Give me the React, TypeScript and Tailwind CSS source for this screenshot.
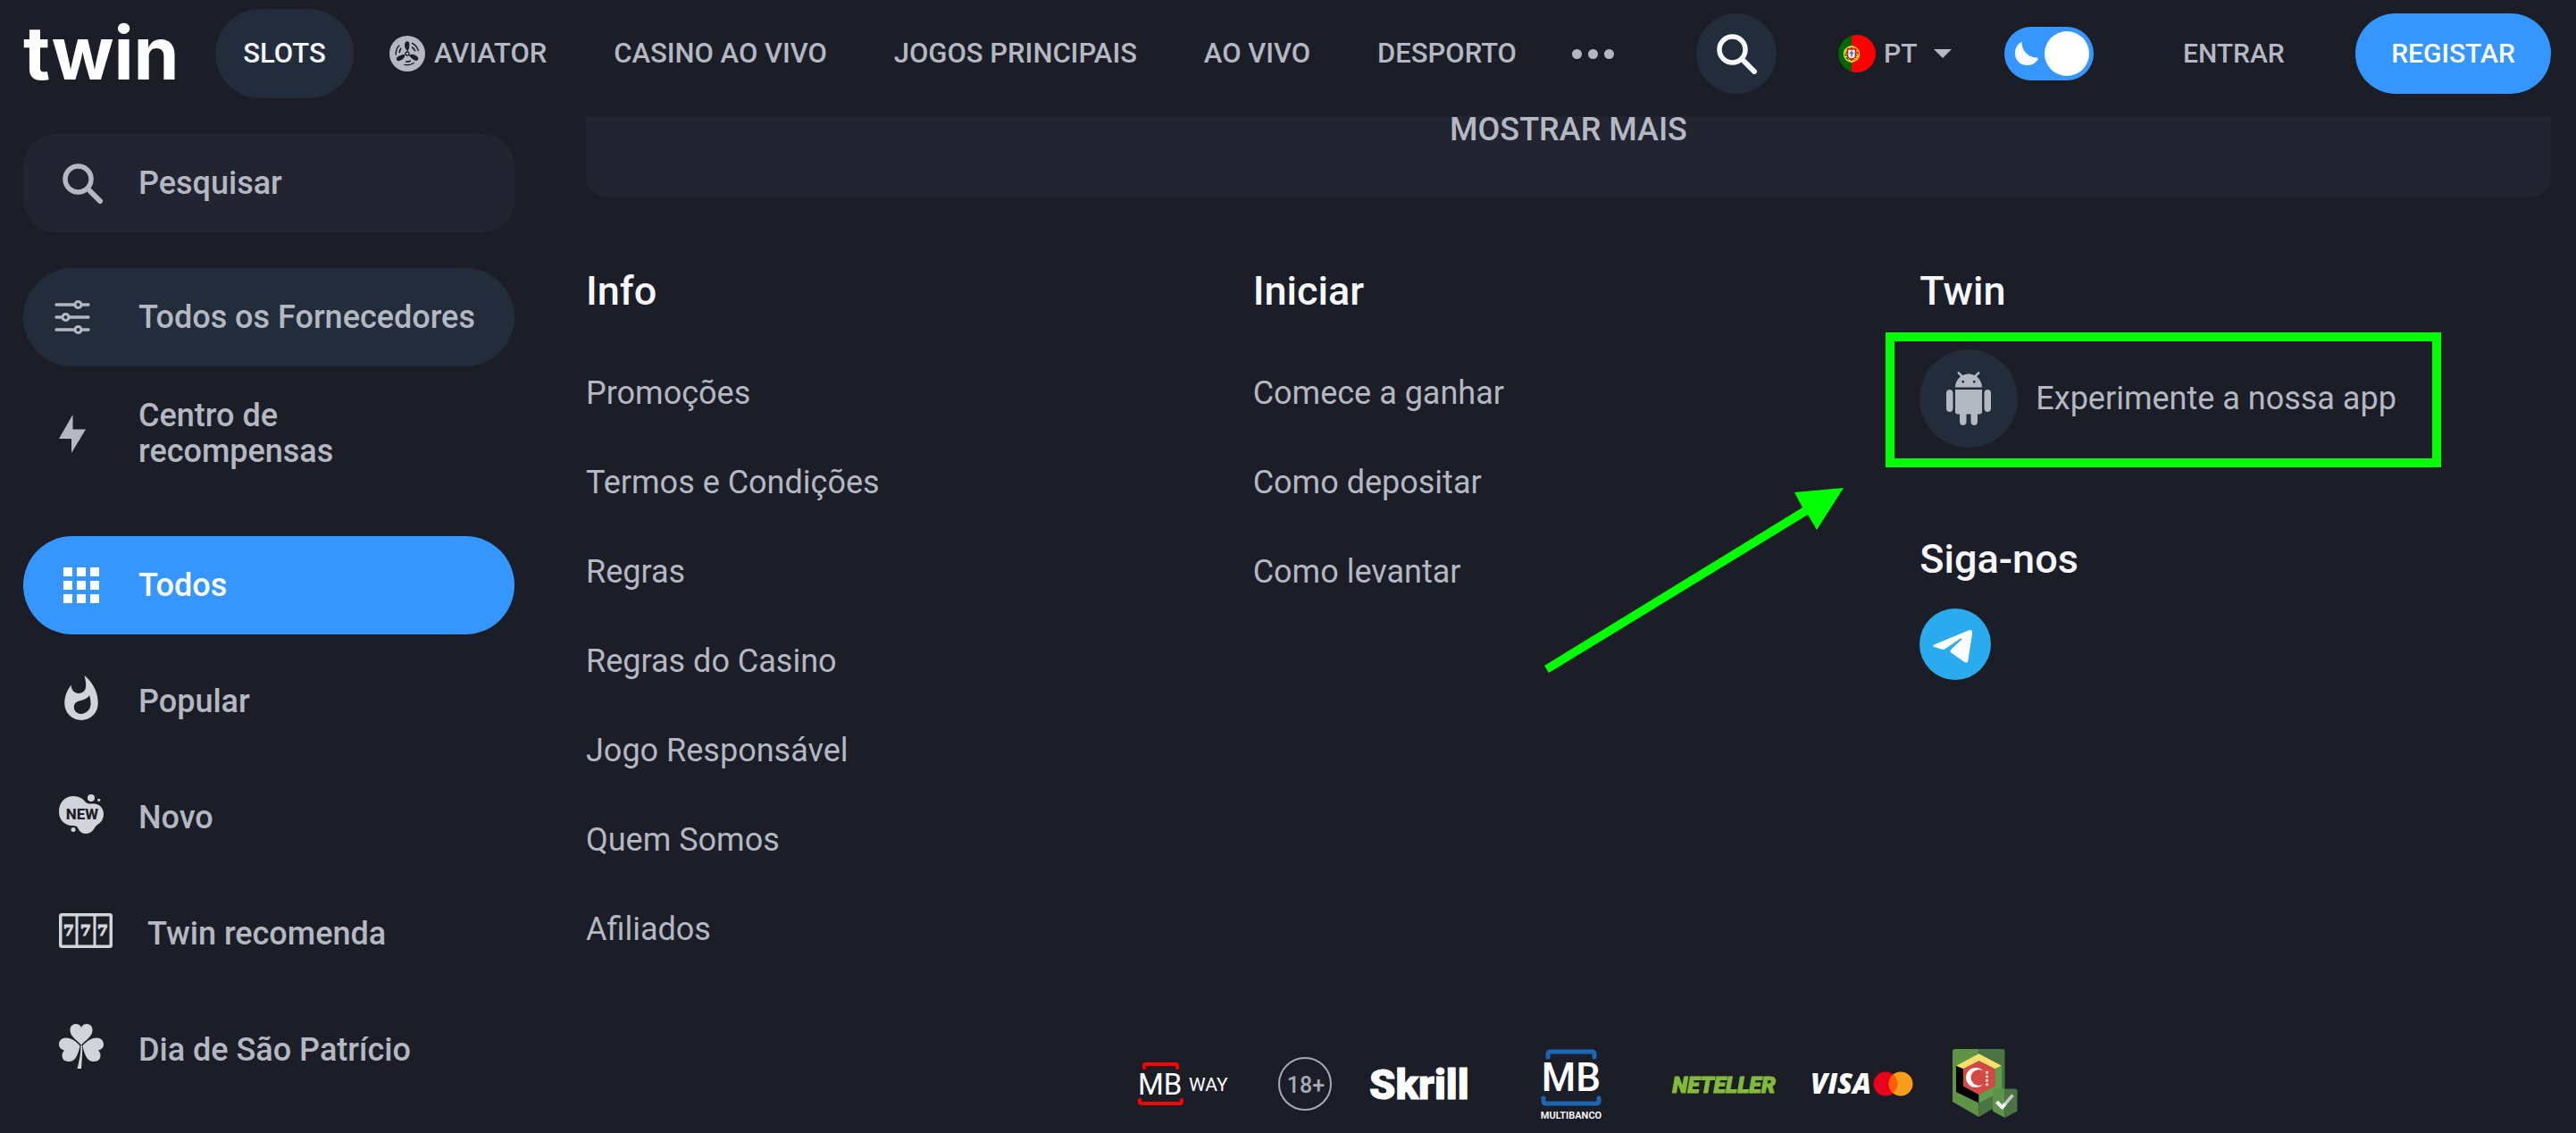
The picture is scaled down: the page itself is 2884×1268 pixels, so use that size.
import React from "react";

const SearchIcon = () => (
  <svg viewBox="-1 -1 46 46" className="size-[46px] shrink-0" fill="none" stroke="currentColor" aria-hidden="true">
    <circle cx="17.5" cy="17.5" r="14.5" strokeWidth="5.5" />
    <path d="M31 31L42 42" strokeWidth="6" strokeLinecap="round" />
    <path d="M28 28l4 4" strokeWidth="5" />
  </svg>
);

const AviatorIcon = () => (
  <svg viewBox="0 0 40 40" className="size-10 shrink-0" aria-hidden="true">
    <circle cx="20" cy="20" r="20" fill="#b3b8c2" />
    <g fill="none" stroke="#1c1e27" strokeLinecap="round">
      {[0, 120, 240].map((angle) => (
        <g key={angle} transform={`rotate(${angle} 20 20)`}>
          <path d="M18 8.5c.8-2.600 3.600-2.200 3.800.5.2 3-.6 5.500-1.300 7.600-2.200-1.600-3.300-5-2.500-8.100z" fill="#1c1e27" strokeWidth="1.200" />
          <path d="M25.500 8.500a12.800 12.800 0 0 1 6.800 8" strokeWidth="1.400" />
          <path d="M25.500 13a8.500 8.500 0 0 1 3 3.600" strokeWidth="1.600" />
        </g>
      ))}
      <circle cx="20" cy="20" r="2" fill="#b3b8c2" strokeWidth="1.300" />
    </g>
  </svg>
);

const FlagIcon = () => (
  <svg viewBox="0 0 42 42" className="size-[42px] shrink-0" aria-hidden="true">
    <clipPath id="flag-round">
      <circle cx="21" cy="21" r="21" />
    </clipPath>
    <g clipPath="url(#flag-round)">
      <path fill="#006600" d="M0 0h15v42H0z" />
      <path fill="#ff0000" d="M15 0h27v42H15z" />
    </g>
    <g fill="none" stroke="#f5e51b" strokeWidth="1.300">
      <circle cx="15" cy="21.500" r="8.500" />
      <ellipse cx="15" cy="21.500" rx="8.500" ry="3.500" transform="rotate(28 15 21.500)" />
      <ellipse cx="15" cy="21.500" rx="4" ry="8.500" />
      <path d="M7 24.500h16M8 18h14" />
    </g>
    <path d="M10.500 16h9v6.500a4.500 4.500 0 0 1-9 0z" fill="#fff" stroke="#e01010" strokeWidth="1.500" />
    <path d="M15 17.500v7M12.500 20.500h5" stroke="#3a5fc0" strokeWidth="1.400" />
  </svg>
);

const SlidersIcon = () => (
  <svg viewBox="0 0 40 40" className="size-10" fill="none" stroke="currentColor" strokeWidth="3.500" strokeLinecap="round" aria-hidden="true">
    <path d="M2 6h20M31 6h7M2 20h6M17 20h21M2 34h20M31 34h7" />
    <g strokeWidth="3">
      <circle cx="26.500" cy="6" r="3.500" />
      <circle cx="12.500" cy="20" r="3.500" />
      <circle cx="26.500" cy="34" r="3.500" />
    </g>
  </svg>
);

const BoltIcon = () => (
  <svg viewBox="0 0 30 43" className="h-[43px] w-[30px]" fill="currentColor" aria-hidden="true">
    <path d="M15.500 0v16.500H30L14 43V27H0z" />
  </svg>
);

const GridIcon = () => (
  <svg viewBox="0 0 40 40" className="size-10" fill="currentColor" aria-hidden="true">
    {[0, 15, 30].map((y) => [0, 15, 30].map((x) => <rect key={`${x}-${y}`} x={x} y={y} width="10" height="10" />))}
  </svg>
);

const FlameIcon = () => (
  <svg viewBox="4 0.67 16 21.330" className="h-[50px] w-[38px]" fill="#d1d5da" aria-hidden="true">
    <path d="M13.5.67s.74 2.65.74 4.8c0 2.06-1.35 3.73-3.41 3.73-2.07 0-3.63-1.67-3.63-3.73l.03-.36C5.21 7.51 4 10.62 4 14c0 4.42 3.58 8 8 8s8-3.58 8-8C20 8.61 17.41 3.8 13.5.67zM11.71 19c-1.78 0-3.22-1.4-3.22-3.14 0-1.62 1.05-2.76 2.81-3.12 1.77-.36 3.6-1.21 4.62-2.58.39 1.29.59 2.65.59 4.04 0 2.65-2.15 4.8-4.8 4.8z" />
  </svg>
);

const NewIcon = () => (
  <svg viewBox="0 0 50 44" className="h-11 w-[50px]" fill="#d1d5da" aria-hidden="true">
    <path d="M16 2C23 2 27 5 30 9C32 11 36 10.500 40 10.500C46 11 50 16 50 22C50 29 46 32 43 34C39 37 38 44 30 44C23 44 22 38 20 36C18 35 16 35 14 35C5 34 0 28 0 19C0 9 7 2 16 2Z" />
    <circle cx="36" cy="4" r="4" />
    <circle cx="44.700" cy="6.300" r="1.600" />
    <circle cx="16" cy="39.500" r="2.500" />
    <text x="26" y="28" textAnchor="middle" fill="#1c1e27" fontSize="17" fontWeight="800" fontFamily="Roboto, sans-serif">NEW</text>
  </svg>
);

const SlotsIcon = () => (
  <svg viewBox="0 0 60 39" className="h-[39px] w-[60px]" aria-hidden="true">
    <rect x="1.750" y="1.750" width="56.500" height="35.500" rx="1.500" fill="none" stroke="#d1d5da" strokeWidth="3.500" />
    <path d="M20 2v35M40 2v35" stroke="#d1d5da" strokeWidth="3" />
    <g fill="#d1d5da" stroke="#d1d5da" strokeWidth="1.200" fontSize="17" fontWeight="700" fontFamily="DejaVu Serif, serif" textAnchor="middle">
      <text x="11" y="25">7</text>
      <text x="30" y="25">7</text>
      <text x="49" y="25">7</text>
    </g>
  </svg>
);

const CloverIcon = () => (
  <svg viewBox="0 0 50 50" className="size-[50px]" fill="#d1d5da" aria-hidden="true">
    <path d="M25 23.500C20 18 12.500 14 12.500 7C12.500 2 15.500 0 19 0C22 0 24 1.500 25 4C26 1.500 28 0 31 0C34.500 0 37.500 2 37.500 7C37.500 14 30 18 25 23.500Z" />
    <path d="M23.500 24.500C20 20 14 15.500 8 15.500C3 15.500 0 18.500 0 23C0 26 2 28.500 6 29.500C3.500 32 3 35 4 38C5 41 8 42 12 42C19 42 22 32 23.500 24.500Z" />
    <path d="M26.500 24.500C30 20 36 15.500 42 15.500C47 15.500 50 18.500 50 23C50 26 48 28.500 44 29.500C46.500 32 47 35 46 38C45 41 42 42 38 42C31 42 28 32 26.500 24.500Z" />
    <path d="M24.500 24h1.500C26.500 32 25.500 42 25 50H20.500C22.500 42 24.500 33 24.500 24z" />
  </svg>
);

const AndroidIcon = () => (
  <svg viewBox="0 0 24 24" className="size-[60px]" fill="currentColor" aria-hidden="true">
    <path d="M6 18c0 .55.45 1 1 1h1v3.5c0 .83.67 1.5 1.5 1.5s1.5-.67 1.5-1.5V19h2v3.5c0 .83.67 1.5 1.5 1.5s1.5-.67 1.5-1.5V19h1c.55 0 1-.45 1-1V8H6v10zM3.5 8C2.67 8 2 8.67 2 9.5v7c0 .83.67 1.5 1.5 1.5S5 17.33 5 16.5v-7C5 8.67 4.33 8 3.5 8zm17 0c-.83 0-1.5.67-1.5 1.5v7c0 .83.67 1.5 1.5 1.5s1.5-.67 1.5-1.5v-7c0-.83-.67-1.5-1.5-1.5zm-4.97-5.84l1.3-1.3c.2-.2.2-.51 0-.71-.2-.2-.51-.2-.71 0l-1.48 1.48C13.85 1.23 12.95 1 12 1c-.96 0-1.86.23-2.66.63L7.85.15c-.2-.2-.51-.2-.71 0-.2.2-.2.51 0 .71l1.31 1.31C6.97 3.26 6 5.01 6 7h12c0-1.99-.97-3.75-2.47-4.84zM10 5H9V4h1v1zm5 0h-1V4h1v1z" />
  </svg>
);

const TelegramIcon = () => (
  <svg viewBox="0 0 80 80" className="size-20" aria-hidden="true">
    <circle cx="40" cy="40" r="40" fill="#2aabee" />
    <path fill="#fff" d="M16.500 40.500L55.500 24.300Q59.500 23 59 28L54.500 57.500Q54 62 50.500 60L36 50Q33.500 48 35.500 45.500L47.500 34.500Q48 33 46 33.500L29 45Q27 46.300 24.500 45.600L16.500 43Q14 42 16.500 40.500Z" />
  </svg>
);

const MbWayLogo = () => (
  <svg viewBox="0 0 100 48" className="h-12 w-[100px] overflow-visible" role="img" aria-label="MB Way">
    <g fill="none" stroke="#ff0000" strokeWidth="4" strokeLinecap="round" strokeLinejoin="round">
      <path d="M7 6V4q0-2 2-2H42q2 0 2 2v2" />
      <path d="M2 42v2q0 2 2 2H47q2 0 2-2v-2" />
    </g>
    <g fill="#fff" fontFamily="Roboto, sans-serif">
      <text x="0" y="36" fontSize="33" fontWeight="400">MB</text>
      <text x="57" y="32" fontSize="21" fontWeight="400">WAY</text>
    </g>
  </svg>
);

const AgeLogo = () => (
  <svg viewBox="0 0 60 60" className="size-[60px]" role="img" aria-label="18+">
    <circle cx="30" cy="30" r="29" fill="none" stroke="#a3abb5" strokeWidth="2" />
    <text x="31" y="40" textAnchor="middle" fill="#a3abb5" fontSize="25" fontWeight="500" fontFamily="Roboto, sans-serif">18+</text>
  </svg>
);

const SkrillLogo = () => (
  <svg viewBox="0 0 112 40" className="h-10 w-28 overflow-visible" role="img" aria-label="Skrill">
    <text x="0" y="37" fill="#fff" stroke="#fff" strokeWidth="1" fontSize="47" fontWeight="900" fontFamily="Roboto, sans-serif">Skrill</text>
  </svg>
);

const MultibancoLogo = () => (
  <svg viewBox="0 0 68 80" className="h-20 w-[68px] overflow-visible" role="img" aria-label="Multibanco">
    <g fill="none" stroke="#1a68b3" strokeWidth="5" strokeLinecap="round" strokeLinejoin="round">
      <path d="M8 10V7q0-3 3-3H57q3 0 3 3v3" />
      <path d="M3 56v3q0 3 3 3H62q3 0 3-3v-3" />
    </g>
    <g fill="#fff" textAnchor="middle" fontFamily="Roboto, sans-serif">
      <text x="34" y="48" fontSize="44" fontWeight="500">MB</text>
      <text x="34" y="79" fontSize="11" fontWeight="600">MULTIBANCO</text>
    </g>
  </svg>
);

const NetellerLogo = () => (
  <svg viewBox="0 0 114 24" className="h-6 w-[114px] overflow-visible" role="img" aria-label="Neteller">
    <text x="57" y="22" textAnchor="middle" fill="#84ba3b" stroke="#84ba3b" strokeWidth="1" fontSize="25" fontWeight="900" fontStyle="italic" fontFamily="Roboto, sans-serif">NETELLER</text>
  </svg>
);

const CardsLogo = () => (
  <svg viewBox="0 0 116 30" className="h-[30px] w-[116px] overflow-visible" role="img" aria-label="Visa e Mastercard">
    <text x="0" y="26" fill="#fff" fontSize="31" fontWeight="800" fontStyle="italic" fontFamily="Open Sans, sans-serif">VISA</text>
    <circle cx="84" cy="15" r="13.500" fill="#eb001b" />
    <circle cx="101" cy="15" r="13.500" fill="#f79e1b" />
    <path d="M92.500 4.500a13.500 13.500 0 0 1 0 21a13.500 13.500 0 0 1 0-21z" fill="#ff5f00" />
  </svg>
);

const LicenceLogo = () => (
  <svg viewBox="0 0 73 78" className="h-[78px] w-[73px]" role="img" aria-label="Licença verificada">
    <path fill="#5f9448" d="M29.500 0H3Q0 0 0 3V59L29.500 76z" />
    <path fill="#4a7443" d="M29.500 0H56Q58.500 0 58.500 3V59L29.500 76z" />
    <path fill="#f9e06c" d="M29.500 5.300L55 18.700l-7.500 3.600-18-9-17.500 9-8-3.600z" />
    <path fill="#000" d="M4 18.700l8 3.600v19.200L29.500 51v9.500L4 48z" />
    <path fill="#5f9f4b" d="M55 18.700V47L29.500 60.500V51l18-9.500V22.300z" />
    <path fill="#d34a45" d="M12 22.300l17.500-9 18 9v19.200l-18 9.500L12 41.500z" />
    <circle cx="26" cy="32" r="11" fill="#fff" />
    <circle cx="29.500" cy="32" r="9" fill="#d34a45" />
    <g fill="#fff">
      {[26, 30.5, 35, 39.5].map((y) => (
        <path key={y} d={`M38.500 ${y - 2}l.6 1.400 1.500.1-1.200 1 .4 1.500-1.300-.8-1.300.8.4-1.500-1.200-1 1.500-.1z`} />
      ))}
    </g>
    <path fill="#5f9448" d="M45 47q0-2.500 2.500-2.500H58.500V77L45 69.500z" />
    <path fill="#4a7443" d="M58.500 44.500H70q2.500 0 2.500 2.500V69.500L58.500 77z" />
    <path d="M49.500 59l6 6.500" stroke="#fff" strokeWidth="4" />
    <path d="M54.500 66.500L67.500 51.500" stroke="#c4c7cb" strokeWidth="3.500" />
    <path d="M54.500 66.500L59 61.500" stroke="#fff" strokeWidth="3.500" />
  </svg>
);

const Arrow = () => (
  <svg
    viewBox="0 0 335 208"
    className="pointer-events-none absolute top-[245px] right-full mr-[85px] h-[208px] w-[335px]"
    fill="#00ff00"
    aria-hidden="true"
  >
    <path d="M0 200L289 23L280 6L335 1L305 48L295 31L5 208z" />
  </svg>
);

const sideItems = [
  { label: "Todos", icon: <GridIcon />, className: "bg-[#3596ff] text-white", slot: "w-[50px]" },
  { label: "Popular", icon: <FlameIcon />, className: "", slot: "w-[50px] pb-2" },
  { label: "Novo", icon: <NewIcon />, className: "", slot: "w-[50px] pb-2" },
  { label: "Twin recomenda", icon: <SlotsIcon />, className: "", slot: "w-[60px] pb-2" },
  { label: "Dia de São Patrício", icon: <CloverIcon />, className: "", slot: "w-[50px] pb-2" },
];

const infoLinks = [
  "Promoções",
  "Termos e Condições",
  "Regras",
  "Regras do Casino",
  "Jogo Responsável",
  "Quem Somos",
  "Afiliados",
];

const startLinks = ["Comece a ganhar", "Como depositar", "Como levantar"];

function LinkColumn({ title, links }: { title: string; links: string[] }) {
  return (
    <section>
      <h2 className="text-[45px] leading-[52px] font-medium text-[#f5f7fb]">{title}</h2>
      <ul className="mt-[68px] flex flex-col gap-[60px]">
        {links.map((link) => (
          <li key={link} className="text-4xl leading-10">
            <a href="#">{link}</a>
          </li>
        ))}
      </ul>
    </section>
  );
}

function Header() {
  return (
    <header className="flex h-[130px] items-start pt-[10px] pr-7 pl-[26px] text-3xl font-medium">
      <div className="flex h-[100px] w-full items-center">
        <a href="#" className="w-[170px] shrink-0 font-['Inter',sans-serif] text-[82px] leading-[82px] font-bold text-white">
          twin
        </a>
        <nav className="ml-[45px] flex flex-1 items-center text-[31px] leading-10 whitespace-nowrap">
          <a href="#" className="flex h-[100px] w-[155px] items-center justify-center rounded-full bg-[#232c3b] text-[#f5f7fb]">
            SLOTS
          </a>
          <div className="ml-10 flex flex-1 items-center justify-between">
            <a href="#" className="flex items-center gap-[10px]">
              <AviatorIcon />
              AVIATOR
            </a>
            <a href="#">CASINO AO VIVO</a>
            <a href="#">JOGOS PRINCIPAIS</a>
            <a href="#">AO VIVO</a>
            <a href="#">DESPORTO</a>
          </div>
          <button type="button" aria-label="Mais" className="ml-[62px] flex gap-[7px]">
            <span className="size-[11px] rounded-full bg-current" />
            <span className="size-[11px] rounded-full bg-current" />
            <span className="size-[11px] rounded-full bg-current" />
          </button>
        </nav>
        <button
          type="button"
          aria-label="Pesquisar"
          className="ml-[92px] flex size-[90px] items-center justify-center rounded-full bg-[#232c3b] text-[#f5f7fb]"
        >
          <SearchIcon />
        </button>
        <label className="ml-[69px] flex items-center">
          <FlagIcon />
          <span className="sr-only">Idioma</span>
          <select className="ml-[9px] h-12 w-[56px] appearance-none bg-transparent font-medium" defaultValue="PT">
            <option>PT</option>
            <option>EN</option>
          </select>
          <svg viewBox="0 0 20 10" className="h-[10px] w-5" fill="currentColor" aria-hidden="true">
            <path d="M0 0h20L10 10z" />
          </svg>
        </label>
        <label className="relative ml-[59px] flex h-[60px] w-[100px] items-center justify-between rounded-full bg-[#3596ff] pr-[5px] pl-3">
          <input type="checkbox" defaultChecked aria-label="Modo escuro" className="absolute inset-0 size-full cursor-pointer appearance-none rounded-full" />
          <svg viewBox="0 0 26 26" className="size-[26px]" fill="#f8fafb" aria-hidden="true">
            <path d="M7.500 0A17 17 0 0 0 25 17.500Q27 19 24 21.500A13 13 0 0 1 13 26A13 13 0 0 1 0 13A14 14 0 0 1 5.500 1Q7.300-.5 7.500 0z" />
          </svg>
          <span className="size-[50px] rounded-full bg-white" />
        </label>
        <button type="button" className="ml-[100px] w-[113px]">ENTRAR</button>
        <button type="button" className="ml-20 h-[90px] w-[219px] rounded-full bg-[#3596ff] text-white">
          REGISTAR
        </button>
      </div>
    </header>
  );
}

function Sidebar() {
  return (
    <aside className="w-[550px] shrink-0 pt-5 text-4xl font-medium">
      <label className="flex h-[110px] items-center rounded-[36px] bg-[#222531] pl-[43px]">
        <SearchIcon />
        <span className="sr-only">Pesquisar</span>
        <input
          type="text"
          placeholder="Pesquisar"
          className="ml-10 h-14 w-[360px] bg-transparent placeholder:text-[#b3b8c2] focus:outline-none"
        />
      </label>
      <a href="#" className="mt-10 flex h-[110px] items-center rounded-full bg-[#232c3b] pl-[35px] whitespace-nowrap">
        <span className="w-[94px]">
          <SlidersIcon />
        </span>
        Todos os Fornecedores
      </a>
      <a href="#" className="mt-5 flex h-[110px] items-center pl-10 leading-10">
        <span className="w-[89px]">
          <BoltIcon />
        </span>
        <span className="w-[300px]">
          Centro de
          <br />
          recompensas
        </span>
      </a>
      <ul className="mt-[60px] flex flex-col gap-5">
        {sideItems.map(({ label, icon, className, slot }) => (
          <li key={label}>
            <a href="#" className={`flex h-[110px] items-center gap-[39px] rounded-full pl-10 ${className}`}>
              <span className={`flex justify-center ${slot}`}>{icon}</span>
              {label}
            </a>
          </li>
        ))}
      </ul>
    </aside>
  );
}

function Content() {
  return (
    <main className="min-w-0 flex-1">
      <button
        type="button"
        className="block w-full rounded-b-[24px] bg-[#222531] pb-[61px] text-center text-4xl leading-[30px] font-medium"
      >
        MOSTRAR MAIS
      </button>
      <footer>
        <div className="mt-[79px] grid grid-cols-3 gap-10">
          <LinkColumn title="Info" links={infoLinks} />
          <LinkColumn title="Iniciar" links={startLinks} />
          <section className="relative">
            <h2 className="text-[45px] leading-[52px] font-medium text-[#f5f7fb]">Twin</h2>
            <a href="#" className="relative mt-[39px] flex items-center text-4xl">
              <span className="mr-5 flex size-[110px] items-center justify-center rounded-full bg-[#232c3b]">
                <AndroidIcon />
              </span>
              Experimente a nossa app
              <span className="pointer-events-none absolute -top-[19px] -bottom-[22px] -left-[38px] w-[622px] border-[10px] border-[#00ff00]" />
            </a>
            <h2 className="mt-[99px] text-[45px] leading-[52px] font-medium text-[#f5f7fb]">Siga-nos</h2>
            <a href="#" aria-label="Telegram" className="mt-[29px] inline-block rounded-full">
              <TelegramIcon />
            </a>
            <Arrow />
          </section>
        </div>
        <div className="mt-[113px] flex h-20 items-center justify-center pl-5">
          <MbWayLogo />
          <span className="ml-[57px]"><AgeLogo /></span>
          <span className="ml-[42px]"><SkrillLogo /></span>
          <span className="ml-20"><MultibancoLogo /></span>
          <span className="ml-20"><NetellerLogo /></span>
          <span className="ml-10"><CardsLogo /></span>
          <span className="ml-[43px]"><LicenceLogo /></span>
        </div>
      </footer>
    </main>
  );
}

export default function App() {
  return (
    <div className="min-h-screen overflow-hidden bg-[#1c1e27] font-['Roboto',sans-serif] text-[#b3b8c2]">
      <Header />
      <div className="flex gap-20 pr-7 pl-[26px]">
        <Sidebar />
        <Content />
      </div>
    </div>
  );
}
